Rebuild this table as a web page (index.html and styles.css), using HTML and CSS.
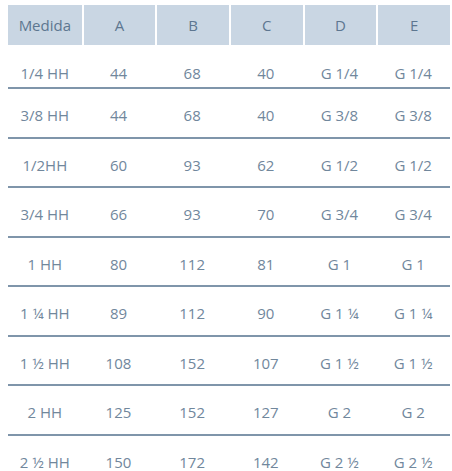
FILE: index.html
```html
<!DOCTYPE html>
<html lang="es">
<head>
  <meta charset="UTF-8" />
  <meta name="viewport" content="width=device-width, initial-scale=1.0"/>
  <title>Medidas</title>
  <link rel="stylesheet" href="styles.css">
</head>
<body>
  <table class="medidas">
    <thead>
      <tr>
        <th>Medida</th>
        <th>A</th>
        <th>B</th>
        <th>C</th>
        <th>D</th>
        <th>E</th>
      </tr>
    </thead>
    <tbody>
      <tr class="first">
        <td>1/4 HH</td><td>44</td><td>68</td><td>40</td><td>G 1/4</td><td>G 1/4</td>
      </tr>
      <tr>
        <td>3/8 HH</td><td>44</td><td>68</td><td>40</td><td>G 3/8</td><td>G 3/8</td>
      </tr>
      <tr>
        <td>1/2HH</td><td>60</td><td>93</td><td>62</td><td>G 1/2</td><td>G 1/2</td>
      </tr>
      <tr>
        <td>3/4 HH</td><td>66</td><td>93</td><td>70</td><td>G 3/4</td><td>G 3/4</td>
      </tr>
      <tr>
        <td>1 HH</td><td>80</td><td>112</td><td>81</td><td>G 1</td><td>G 1</td>
      </tr>
      <tr>
        <td>1 ¼ HH</td><td>89</td><td>112</td><td>90</td><td>G 1 ¼</td><td>G 1 ¼</td>
      </tr>
      <tr>
        <td>1 ½ HH</td><td>108</td><td>152</td><td>107</td><td>G 1 ½</td><td>G 1 ½</td>
      </tr>
      <tr>
        <td>2 HH</td><td>125</td><td>152</td><td>127</td><td>G 2</td><td>G 2</td>
      </tr>
      <tr class="last">
        <td>2 ½ HH</td><td>150</td><td>172</td><td>142</td><td>G 2 ½</td><td>G 2 ½</td>
      </tr>
    </tbody>
  </table>
</body>
</html>
```

FILE: styles.css
```css
* { box-sizing: border-box; }

body {
  margin: 0;
  padding: 5px 2px 0 8px;
  background: #fff;
  font-family: "Open Sans", "Noto Sans", sans-serif;
  color: #71879c;
}

.medidas {
  width: 442px;
  table-layout: fixed;
  border-collapse: separate;
  border-spacing: 0;
  font-size: 15px;
}

th {
  height: 40px;
  padding: 0;
  background: #c9d6e3;
  color: #5d7690;
  font-weight: 400;
  text-align: center;
  border-left: 2px solid #fff;
}

th:first-child { border-left: 0; }

td {
  height: 49.5px;
  padding: 16px 0 0;
  line-height: 20px;
  text-align: center;
  vertical-align: top;
  border-bottom: 2px solid #7f95aa;
}

tr.first td {
  height: 44px;
  padding-top: 18px;
}

tr.last td {
  height: 34px;
  border-bottom: 0;
}
```
